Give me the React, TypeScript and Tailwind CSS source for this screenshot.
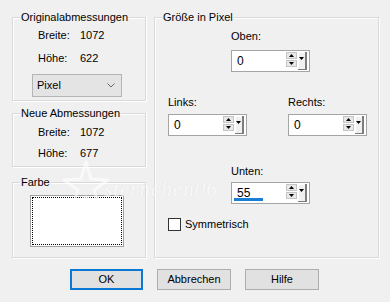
import React from "react";

const FONT = { fontFamily: '"Liberation Sans", Arial, sans-serif' };

function Group({
  title,
  className,
  children,
}: {
  title: string;
  className: string;
  children?: React.ReactNode;
}) {
  return (
    <div className={`relative border border-[#d9d9d9] shadow-[inset_1px_1px_0_#ffffff,1px_1px_0_#ffffff] ${className}`}>
      <span className="absolute left-[7px] top-[-8px] bg-[#f0f0f0] px-[1px] text-[11px] leading-[14px] text-black">
        {title}
      </span>
      {children}
    </div>
  );
}

function Tri({ up }: { up?: boolean }) {
  return (
    <svg width="5" height="3" viewBox="0 0 5 3" className="block">
      <path d={up ? "M2.5 0L5 3H0Z" : "M0 0H5L2.5 3Z"} fill="#000" />
    </svg>
  );
}

function Spinner({ value, focused }: { value: string; focused?: boolean }) {
  return (
    <div className="relative flex h-[22px] w-[79px] items-stretch border border-[#a5a5a5] bg-white">
      <div className="flex flex-1 items-center pl-[5px] text-[12px] leading-[14px] text-black">{value}</div>
      <div className="mt-[1px] flex w-[11px] flex-col gap-[1px]">
        <div className="flex h-[7px] items-center justify-center border border-[#c4c4c4] bg-[#e8e8e8]">
          <Tri up />
        </div>
        <div className="flex h-[7px] items-center justify-center border border-[#c4c4c4] bg-[#e8e8e8]">
          <Tri />
        </div>
      </div>
      <div className="ml-[1px] mr-[2px] mt-[1px] flex h-[18px] w-[9px] justify-center border-b border-r-2 border-[#7d7d7d] bg-[#f0f0f0] pt-[5px] shadow-[inset_1px_1px_0_#ffffff]">
        <Tri />
      </div>
      {focused && <div className="absolute bottom-[2px] left-[2px] h-[3px] w-[29px] bg-[#1a7fd4]" />}
    </div>
  );
}

export default function App() {
  return (
    <div
      className="relative h-[302px] w-[390px] overflow-hidden bg-[#f0f0f0] pl-[12px] pt-[17px] text-[11px] text-black"
      style={FONT}
    >
      <div className="flex">
        {/* linke Spalte */}
        <div className="flex w-[134px] flex-col">
          <Group title="Originalabmessungen" className="h-[84px]">
            <div className="flex flex-col pl-[19px] pt-[10px]">
              <div className="flex flex-col gap-[9px] pl-[6px] leading-[14px]">
                <div className="flex">
                  <span className="w-[42px]">Breite:</span>
                  <span>1072</span>
                </div>
                <div className="flex">
                  <span className="w-[42px]">Höhe:</span>
                  <span>622</span>
                </div>
              </div>
              <div className="mt-[9px] flex h-[23px] w-[90px] items-center justify-between border border-[#b4b4b4] bg-[#e4e4e4] pl-[4px] pr-[6px]">
                <span>Pixel</span>
                <svg width="8" height="5" viewBox="0 0 8 5">
                  <path d="M0.5 0.5L4 4L7.5 0.5" fill="none" stroke="#6a6a6a" strokeWidth="1" />
                </svg>
              </div>
            </div>
          </Group>

          <Group title="Neue Abmessungen" className="mt-[12px] h-[54px]">
            <div className="flex flex-col gap-[7px] pl-[25px] pt-[11px] leading-[14px]">
              <div className="flex">
                <span className="w-[42px]">Breite:</span>
                <span>1072</span>
              </div>
              <div className="flex">
                <span className="w-[42px]">Höhe:</span>
                <span>677</span>
              </div>
            </div>
          </Group>

          <Group title="Farbe" className="mt-[15px] h-[76px]">
            <div className="pl-[17px] pt-[12px]">
              <div className="h-[52px] w-[94px] border border-[#a0a0a0] bg-white p-[1px]">
                <div className="h-full w-full border border-dotted border-black" />
              </div>
            </div>
          </Group>
        </div>

        {/* rechte Gruppe */}
        <Group title="Größe in Pixel" className="ml-[8px] h-[241px] w-[225px]">
          <div className="flex flex-col pt-[11px]">
            <div className="ml-[76px] flex flex-col leading-[14px]">
              <span>Oben:</span>
              <div className="mt-[7px]">
                <Spinner value="0" />
              </div>
            </div>

            <div className="ml-[13px] mt-[23px] flex gap-[41px] leading-[14px]">
              <div className="flex flex-col">
                <span>Links:</span>
                <div className="mt-[5px]">
                  <Spinner value="0" />
                </div>
              </div>
              <div className="flex flex-col">
                <span>Rechts:</span>
                <div className="mt-[5px]">
                  <Spinner value="0" />
                </div>
              </div>
            </div>

            <div className="ml-[76px] mt-[28px] flex flex-col leading-[14px]">
              <span>Unten:</span>
              <div className="mt-[4px]">
                <Spinner value="55" focused />
              </div>
            </div>

            <div className="ml-[13px] mt-[13px] flex items-center gap-[4px] leading-[14px]">
              <div className="h-[13px] w-[13px] border border-[#333333] bg-white" />
              <span>Symmetrisch</span>
            </div>
          </div>
        </Group>
      </div>

      {/* Schaltflächen */}
      <div className="mt-[11px] flex gap-[14px] pl-[58px]">
        <button className="flex h-[21px] w-[73px] items-center justify-center border-2 border-[#0a78d4] bg-[#e1e1e1] text-[11px]">
          OK
        </button>
        <button className="flex h-[21px] w-[74px] items-center justify-center border border-[#adadad] bg-[#e1e1e1] text-[11px]">
          Abbrechen
        </button>
        <button className="flex h-[21px] w-[74px] items-center justify-center border border-[#adadad] bg-[#e1e1e1] text-[11px]">
          Hilfe
        </button>
      </div>

      {/* Wasserzeichen */}
      <div className="pointer-events-none absolute left-[62px] top-[160px] flex items-end opacity-60">
        <svg width="48" height="52" viewBox="0 0 48 52">
          <path
            d="M24 2L29 19L46 20L32 30L38 48L24 37L10 48L16 30L2 20L19 19Z"
            fill="none"
            stroke="#ffffff"
            strokeWidth="3"
            strokeLinejoin="round"
          />
        </svg>
        <span
          className="-ml-[6px] mb-[12px] text-[21px] italic leading-[22px] tracking-[1px] text-white [text-shadow:0_0_1px_#d0d0d0]"
          style={{ fontFamily: '"Liberation Serif", serif' }}
        >
          sternchen06
        </span>
      </div>
    </div>
  );
}
